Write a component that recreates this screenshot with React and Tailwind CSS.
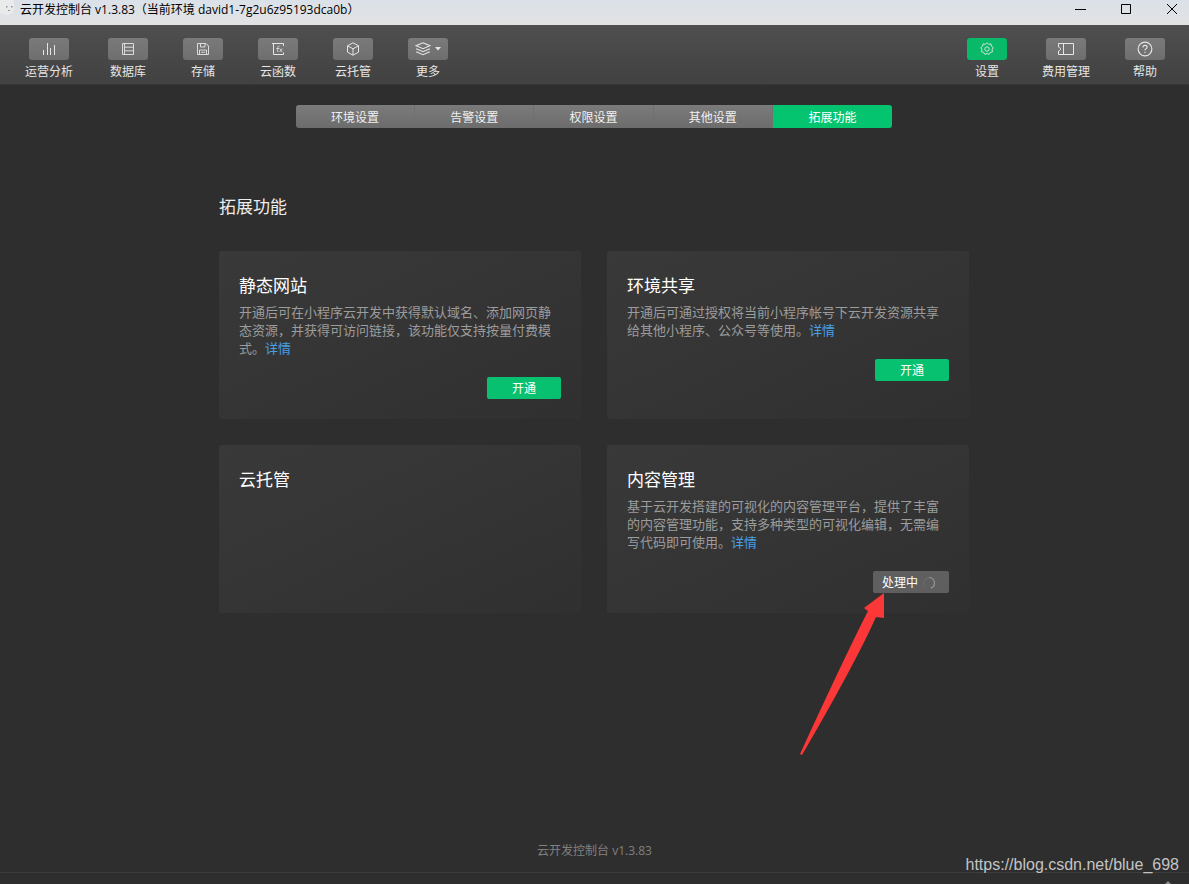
import React from "react";

function Icon({ children, className = "size-3.5" }) {
  return (
    <svg viewBox="0 0 14 14" className={className} fill="none" stroke="currentColor" strokeWidth="1" aria-hidden="true">
      {children}
    </svg>
  );
}

const leftTools = [
  {
    label: "运营分析",
    icon: (
      <Icon>
        <path d="M1.5 13V8M5.5 13V1M8.5 13V6M12.5 13V3" />
      </Icon>
    ),
  },
  {
    label: "数据库",
    icon: (
      <Icon>
        <path d="M1.5 1.5h11v11h-11zM3.5 1.5v11M3.5 5.2h9M3.5 8.8h9" strokeWidth=".9" />
      </Icon>
    ),
  },
  {
    label: "存储",
    icon: (
      <Icon>
        <path d="M1.5 1.5h8.5l2.5 2.5v8.5h-11zM4.5 1.5v3.500h4.500v-3.500M3.500 12.500v-4.500h7v4.500M5 10.200h4" strokeWidth=".9" />
      </Icon>
    ),
  },
  {
    label: "云函数",
    icon: (
      <Icon>
        <path d="M1 1.500h11.500v2.500M2.500 1.500v11h10v-2" />
        <path d="M8.400 4.300c-1.300-.2-1.700.4-1.700 1.400v4.300M5.300 6.500h2.700M8.600 6.500l2.600 3.500M11.200 6.500l-2.600 3.500" strokeWidth=".8" />
      </Icon>
    ),
  },
  {
    label: "云托管",
    icon: (
      <Icon>
        <path d="M7 .8l5.500 3v6.400l-5.500 3-5.500-3v-6.400zM1.500 3.800l5.500 3 5.500-3M7 6.800v6.400" />
      </Icon>
    ),
  },
  {
    label: "更多",
    more: true,
    icon: (
      <Icon className="size-4">
        <path d="M7 1.500l6 2.600-6 2.600-6-2.600zM1 6.800l6 2.600 6-2.600M1 9.400l6 2.600 6-2.600" strokeWidth=".9" />
      </Icon>
    ),
  },
];

const rightTools = [
  {
    label: "设置",
    active: true,
    icon: (
      <Icon>
        <path d="M7 .8l1.700 1.500 2.300-.4.400 2.300 1.800 1.400-1.100 1.900.4 2.300-2.200.6-1.200 2-2.100-.9-2.100.9-1.200-2-2.200-.6.400-2.300-1.100-1.900 1.800-1.400.4-2.300 2.300.4z" strokeWidth=".9" />
        <circle cx="7" cy="7" r="2.200" strokeWidth=".9" />
      </Icon>
    ),
  },
  {
    label: "费用管理",
    icon: (
      <svg viewBox="0 0 18 14" className="h-3.5 w-[18px]" fill="none" stroke="currentColor" aria-hidden="true">
        <path d="M1.500 1.500h15v11h-15v-3.500c1.300-.3 2-1 2-2s-.7-1.700-2-2zM6.500 1.500v11" />
      </svg>
    ),
  },
  {
    label: "帮助",
    icon: (
      <Icon className="size-4">
        <circle cx="7" cy="7" r="6" />
        <path d="M5.200 5.600c0-1.100.8-1.800 1.800-1.800s1.800.7 1.800 1.600c0 1.200-1.800 1.300-1.800 2.700M7 9.300v1.200" />
      </Icon>
    ),
  },
];

function Tool({ label, icon, active, more }) {
  return (
    <button type="button" className="flex flex-col items-center gap-1 text-xs leading-4 text-[#e6e6e6]">
      <span
        className={
          active
            ? "flex h-[22px] w-10 items-center justify-center rounded-[3px] bg-[#07b968]"
            : "flex h-[22px] w-10 items-center justify-center gap-1 rounded-[3px] bg-linear-to-b from-[#7a7a7a] to-[#6e6e6e]"
        }
      >
        {icon}
        {more && (
          <svg viewBox="0 0 6 4" className="h-1 w-1.5" fill="currentColor" aria-hidden="true">
            <path d="M0 0h6L3 3.500z" />
          </svg>
        )}
      </span>
      {label}
    </button>
  );
}

const tabs = ["环境设置", "告警设置", "权限设置", "其他设置", "拓展功能"];

function Card({ title, text, children }) {
  return (
    <section className="min-h-[168px] rounded-[3px] bg-linear-to-br from-[#393939] to-[#303030] px-5 pt-[22px] pb-5">
      <h2 className="text-[17px] leading-[26px] text-white">{title}</h2>
      {text && (
        <p className="mt-1 text-[13px] leading-[18px] text-[#9c9c9c]">
          {text}
          <a href="#detail" className="text-[#46a0ea]">
            详情
          </a>
        </p>
      )}
      {children && <div className="mt-5 flex justify-end">{children}</div>}
    </section>
  );
}

function OpenButton() {
  return (
    <button type="button" className="h-[22px] w-[74px] rounded-[2px] bg-[#07c170] pt-0.5 text-xs text-white">
      开通
    </button>
  );
}

export default function App() {
  return (
    <div
      className="relative flex min-h-screen flex-col bg-[#2e2e2e] font-['Open_Sans','Noto_Sans_CJK_SC',sans-serif]"
      lang="zh-CN"
    >
      <header className="flex h-[25px] items-start justify-between bg-linear-to-b from-[#dbe1e9] to-[#e2e3e3] text-black">
        <div className="flex items-center">
          <svg viewBox="0 0 20 20" className="size-5" aria-hidden="true">
            <path d="M0 0h14v10q-2 5-8 5l-6-2z" fill="#e9eaea" />
            <path d="M6 6h1.500v1.500h-1.500zM11 6h1.500v1.500h-1.500zM8 10h2v1h-2z" fill="#8e9396" />
          </svg>
          <h1 className="text-xs leading-5">云开发控制台 v1.3.83（当前环境 david1-7g2u6z95193dca0b）</h1>
        </div>
        <div className="flex">
          <button type="button" aria-label="最小化" className="flex h-[18px] w-[46px] items-center justify-center">
            <svg viewBox="0 0 12 12" className="size-3" stroke="currentColor" aria-hidden="true">
              <path d="M1 6.500h11" />
            </svg>
          </button>
          <button type="button" aria-label="最大化" className="flex h-[18px] w-[46px] items-center justify-center">
            <svg viewBox="0 0 12 12" className="size-3" fill="none" stroke="currentColor" aria-hidden="true">
              <path d="M1.500 1.500h9v9h-9z" />
            </svg>
          </button>
          <button type="button" aria-label="关闭" className="flex h-[18px] w-10 items-center justify-center pl-1.5">
            <svg viewBox="0 0 12 12" className="size-3" fill="none" stroke="currentColor" aria-hidden="true">
              <path d="M1 1l10 10M11 1l-10 10" />
            </svg>
          </button>
        </div>
      </header>

      <nav className="flex h-[60px] justify-between border-b border-[#363636] bg-linear-to-b from-[#4f4f4f] to-[#414141] pt-[13px] pr-6 pl-[25px]">
        <div className="flex items-start gap-[35px]">
          {leftTools.map((t) => (
            <Tool key={t.label} {...t} />
          ))}
        </div>
        <div className="flex items-start gap-[35px]">
          {rightTools.map((t) => (
            <Tool key={t.label} {...t} />
          ))}
        </div>
      </nav>

      <main className="flex flex-1 flex-col items-center pt-5 pr-[21px] pl-5">
        <div className="grid w-full max-w-[596px] grid-cols-5 overflow-hidden rounded-[3px]">
          {tabs.map((t, i) => (
            <button
              key={t}
              type="button"
              className={
                i === 4
                  ? "h-[23px] bg-[#05c46f] pt-0.5 text-xs text-white"
                  : "h-[23px] border-r border-[#707070] bg-linear-to-b from-[#7b7b7b] to-[#6c6c6c] pt-0.5 text-xs text-[#f0f0f0]"
              }
            >
              {t}
            </button>
          ))}
        </div>

        <div className="mt-[66px] w-full max-w-[750px]">
          <h2 className="text-[17px] leading-[26px] text-[#ececec]">拓展功能</h2>
          <div className="mt-[31px] grid grid-cols-2 gap-[26px]">
            <Card
              title="静态网站"
              text="开通后可在小程序云开发中获得默认域名、添加网页静态资源，并获得可访问链接，该功能仅支持按量付费模式。"
            >
              <OpenButton />
            </Card>
            <Card title="环境共享" text="开通后可通过授权将当前小程序帐号下云开发资源共享给其他小程序、公众号等使用。">
              <OpenButton />
            </Card>
            <Card title="云托管" />
            <Card
              title="内容管理"
              text="基于云开发搭建的可视化的内容管理平台，提供了丰富的内容管理功能，支持多种类型的可视化编辑，无需编写代码即可使用。"
            >
              <div className="relative">
                <button
                  type="button"
                  className="flex h-[22px] w-[76px] items-center gap-1 rounded-[2px] bg-[#5f5f5f] pt-0.5 pl-[9px] text-xs text-white"
                >
                  处理中
                  <svg viewBox="0 0 14 14" className="size-3.5" fill="none" stroke="#929292" aria-hidden="true">
                    <path d="M7 1.500a5.500 5.500 0 0 1 2 10.600" strokeWidth="1.200" />
                    <path d="M7 1.500a5.500 5.500 0 0 0-3 10" strokeWidth="1" opacity=".25" />
                  </svg>
                </button>
                <svg
                  viewBox="0 0 90 164"
                  className="pointer-events-none absolute top-[22px] right-16 h-[164px] w-[90px]"
                  aria-hidden="true"
                >
                  <path d="M89 0L69 15L73 18Q50 63 5 161L7 162Q60 71 81 24L89 25z" fill="#fb3737" />
                </svg>
              </div>
            </Card>
          </div>
        </div>
      </main>

      <footer className="pt-5">
        <p className="pb-[11px] text-center text-xs leading-5 text-[#808080]">云开发控制台 v1.3.83</p>
        <div className="flex h-3 items-end justify-end border-t border-[#3d3d3d] pr-[18px]">
          <svg viewBox="0 0 6 3" className="h-[3px] w-1.5" aria-hidden="true">
            <path d="M0 3L3 0L6 3z" fill="#8a8a8a" />
          </svg>
        </div>
      </footer>

      <a
        href="https://blog.csdn.net/blue_698"
        className="absolute right-[10px] bottom-2 font-['Liberation_Sans',sans-serif] text-base leading-[22px] text-[#c4c4c4]"
      >
        https://blog.csdn.net/blue_698
      </a>
    </div>
  );
}
